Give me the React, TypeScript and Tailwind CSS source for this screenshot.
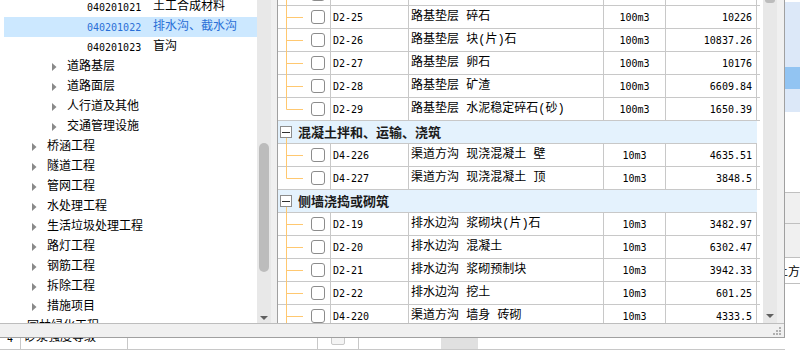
import React from "react";

type TreeRow = { level: number; code?: string; label: string; selected?: boolean };

const tree: TreeRow[] = [
  { level: 3, code: "040201021", label: "土工合成材料" },
  { level: 3, code: "040201022", label: "排水沟、截水沟", selected: true },
  { level: 3, code: "040201023", label: "盲沟" },
  { level: 2, label: "道路基层" },
  { level: 2, label: "道路面层" },
  { level: 2, label: "人行道及其他" },
  { level: 2, label: "交通管理设施" },
  { level: 1, label: "桥涵工程" },
  { level: 1, label: "隧道工程" },
  { level: 1, label: "管网工程" },
  { level: 1, label: "水处理工程" },
  { level: 1, label: "生活垃圾处理工程" },
  { level: 1, label: "路灯工程" },
  { level: 1, label: "钢筋工程" },
  { level: 1, label: "拆除工程" },
  { level: 1, label: "措施项目" },
  { level: 0, label: "园林绿化工程" },
];

const indent = ["pl-[8px]", "pl-[28px]", "pl-[48px]", "pl-[68px]"];

type Row =
  | { kind: "item"; code: string; name: string; unit: string; value: string; last?: boolean }
  | { kind: "group"; name: string };

const rows: Row[] = [
  { kind: "item", code: "", name: "", unit: "", value: "" },
  { kind: "item", code: "D2-25", name: "路基垫层 碎石", unit: "100m3", value: "10226" },
  { kind: "item", code: "D2-26", name: "路基垫层 块(片)石", unit: "100m3", value: "10837.26" },
  { kind: "item", code: "D2-27", name: "路基垫层 卵石", unit: "100m3", value: "10176" },
  { kind: "item", code: "D2-28", name: "路基垫层 矿渣", unit: "100m3", value: "6609.84" },
  { kind: "item", code: "D2-29", name: "路基垫层 水泥稳定碎石(砂)", unit: "100m3", value: "1650.39", last: true },
  { kind: "group", name: "混凝土拌和、运输、浇筑" },
  { kind: "item", code: "D4-226", name: "渠道方沟 现浇混凝土 壁", unit: "10m3", value: "4635.51" },
  { kind: "item", code: "D4-227", name: "渠道方沟 现浇混凝土 顶", unit: "10m3", value: "3848.5", last: true },
  { kind: "group", name: "侧墙浇捣或砌筑" },
  { kind: "item", code: "D2-19", name: "排水边沟 浆砌块(片)石", unit: "10m3", value: "3482.97" },
  { kind: "item", code: "D2-20", name: "排水边沟 混凝土", unit: "10m3", value: "6302.47" },
  { kind: "item", code: "D2-21", name: "排水边沟 浆砌预制块", unit: "10m3", value: "3942.33" },
  { kind: "item", code: "D2-22", name: "排水边沟 挖土", unit: "10m3", value: "601.25" },
  { kind: "item", code: "D4-220", name: "渠道方沟 墙身 砖砌", unit: "10m3", value: "4333.5" },
];

const mono = "font-[family-name:'DejaVu_Sans_Mono','Noto_Sans_CJK_SC',monospace] text-[10px]";
const cjk = "font-[family-name:'Liberation_Mono','Noto_Sans_CJK_SC',monospace] text-[12px]";

function Arrow() {
  return (
    <svg width="5" height="8" viewBox="0 0 5 8">
      <polygon points="0,0 4.5,4 0,8" fill="#8a8a8a" />
    </svg>
  );
}

function TreePanel() {
  return (
    <div className="w-[257px] shrink-0 overflow-hidden bg-white">
      <div className="mt-[-3px] pl-[4px]">
        {tree.map((r, i) => (
          <div
            key={i}
            className={`flex h-[20px] items-center ${indent[r.level]} ${
              r.selected ? "bg-[#cce8ff] text-[#2a6fd6]" : "text-black"
            }`}
          >
            <div className="flex w-[15px] shrink-0 items-center">{r.level < 3 && <Arrow />}</div>
            {r.code && <span className={`w-[66px] shrink-0 ${mono}`}>{r.code}</span>}
            <span className={`whitespace-nowrap ${cjk}`}>{r.label}</span>
          </div>
        ))}
      </div>
    </div>
  );
}

function DownArrow() {
  return (
    <svg width="8" height="4" viewBox="0 0 8 4">
      <polygon points="0,0 8,0 4,4" fill="#606060" />
    </svg>
  );
}

function TreeScrollbar() {
  return (
    <div className="flex w-[14px] shrink-0 flex-col items-center bg-[#e8e8e8]">
      <div className="mt-[143px] h-[129px] w-[10px] rounded-full bg-[#bcbcbc]" />
      <div className="mt-auto mb-[3px]">
        <DownArrow />
      </div>
    </div>
  );
}

function ItemRow({ r }: { r: Extract<Row, { kind: "item" }> }) {
  return (
    <div className="flex h-[23px] border-b border-[#c8c8c8]">
      <div className="relative flex w-[53px] shrink-0 items-center border-r border-[#c8c8c8] pl-[33px]">
        <svg className="absolute left-0 top-0" width="52" height="23">
          <line x1="8.5" y1="0" x2="8.5" y2={r.last ? 11.5 : 23} stroke="#ffc870" />
          <line x1="8.5" y1="11.5" x2="25" y2="11.5" stroke="#ffc870" />
        </svg>
        <div className="relative h-[14px] w-[14px] rounded-[3px] border border-[#8c8c8c] bg-white" />
      </div>
      <div className={`flex w-[78px] shrink-0 items-center border-r border-[#c8c8c8] pl-[2px] ${mono}`}>{r.code}</div>
      <div className={`flex w-[195px] shrink-0 items-center whitespace-nowrap border-r border-[#c8c8c8] pl-[2px] ${cjk}`}>
        {r.name}
      </div>
      <div className={`flex w-[62px] shrink-0 items-center justify-center border-r border-[#c8c8c8] ${mono}`}>{r.unit}</div>
      <div className={`flex w-[91px] shrink-0 items-center justify-end border-r border-[#c8c8c8] pr-[4px] ${mono}`}>
        {r.value}
      </div>
    </div>
  );
}

function GroupRow({ name }: { name: string }) {
  return (
    <div className="relative flex h-[23px] w-[479px] items-center border-b border-[#c8c8c8] bg-[#e4f2fd]">
      <svg className="absolute left-0 top-0" width="20" height="23">
        <line x1="8.5" y1="16" x2="8.5" y2="23" stroke="#ffc870" />
      </svg>
      <div className="relative ml-[2px] flex h-[12px] w-[12px] items-center justify-center border border-[#8c8c8c] bg-white">
        <div className="h-px w-[8px] bg-[#303030]" />
      </div>
      <span className="ml-[6px] font-['Noto_Sans_CJK_SC',sans-serif] text-[13px] font-bold text-[#1a1a1a]">{name}</span>
    </div>
  );
}

function TablePanel() {
  return (
    <div className="w-[483px] shrink-0 overflow-hidden border-l border-[#a0a0a0] bg-white text-black">
      <div className="mt-[-17px]">
        {rows.map((r, i) => (r.kind === "group" ? <GroupRow key={i} name={r.name} /> : <ItemRow key={i} r={r} />))}
      </div>
    </div>
  );
}

function TableScrollbar() {
  return (
    <div className="flex w-[14px] shrink-0 flex-col items-center bg-[#e8e8e8]">
      <div className="h-[3px] w-[10px] rounded-b-[5px] bg-[#bcbcbc]" />
      <div className="mt-auto mb-[5px]">
        <DownArrow />
      </div>
    </div>
  );
}

function Grip() {
  return (
    <svg width="10" height="10" viewBox="0 0 10 10">
      {[
        [8, 0],
        [5, 3],
        [8, 3],
        [2, 6],
        [5, 6],
        [8, 6],
      ].map(([x, y], i) => (
        <rect key={i} x={x} y={y + 1} width="2" height="2" fill="#b0b0b0" />
      ))}
    </svg>
  );
}

function Background() {
  return (
    <div className="absolute inset-0">
      <div className="absolute left-[785px] top-0 flex h-[352px] w-[15px] flex-col overflow-hidden bg-white">
        <div className="h-[2px] shrink-0" />
        <div className="h-[65px] shrink-0 bg-[#dce8f8]" />
        <div className="h-[22px] shrink-0 bg-[#92c4f2]" />
        <div className="h-[23px] shrink-0 bg-[#dce8f8]" />
        <div className="h-[80px] shrink-0" />
        <div className="h-[31px] shrink-0 border-t border-[#c0c0c0] bg-[#f0f0f0]" />
        <div className="h-[34px] shrink-0 border-t border-[#c0c0c0] bg-[#f0f0f0]" />
        <div className="flex h-[26px] shrink-0 items-center whitespace-nowrap border-t border-[#c0c0c0] font-['Noto_Sans_CJK_SC',sans-serif] text-[12px] text-black">
          <span className="ml-[-9px]">土方</span>
        </div>
        <div className="border-t border-[#c0c0c0]" />
      </div>
      <div className="absolute left-0 top-[327px] flex h-[23px] w-[785px] border-b border-[#c8c8c8] bg-white">
        <div className={`flex w-[21px] items-center justify-center border-r border-[#c8c8c8] ${mono}`}>4</div>
        <div className={`flex w-[107px] items-center border-r border-[#c8c8c8] pl-[3px] ${cjk}`}>砂浆强度等级</div>
        <div className="w-[190px] border-r border-[#c8c8c8]" />
        <div className="flex w-[41px] items-center justify-center border-r border-[#c8c8c8]">
          <div className="h-[14px] w-[14px] rounded-[2px] border border-[#c8c8c8] bg-[#f4f4f4]" />
        </div>
        <div className="w-[82px]" />
        <div className="w-[37px] bg-[#e0e0e0]" />
      </div>
    </div>
  );
}

export default function App() {
  return (
    <div className="relative h-[352px] w-[800px] overflow-hidden bg-white">
      <Background />
      <div className="absolute left-0 top-0 flex h-[338px] w-[785px] flex-col border-r border-b border-[#a0a0a0] bg-[#f0f0f0]">
        <div className="flex h-[323px] shrink-0">
          <TreePanel />
          <TreeScrollbar />
          <div className="w-[6px] shrink-0" />
          <TablePanel />
          <div className="w-[3px] shrink-0 bg-white" />
          <TableScrollbar />
        </div>
        <div className="flex flex-1 items-end justify-end border-t border-[#bdbdbd] pr-[3px] pb-[1px]">
          <Grip />
        </div>
      </div>
    </div>
  );
}
